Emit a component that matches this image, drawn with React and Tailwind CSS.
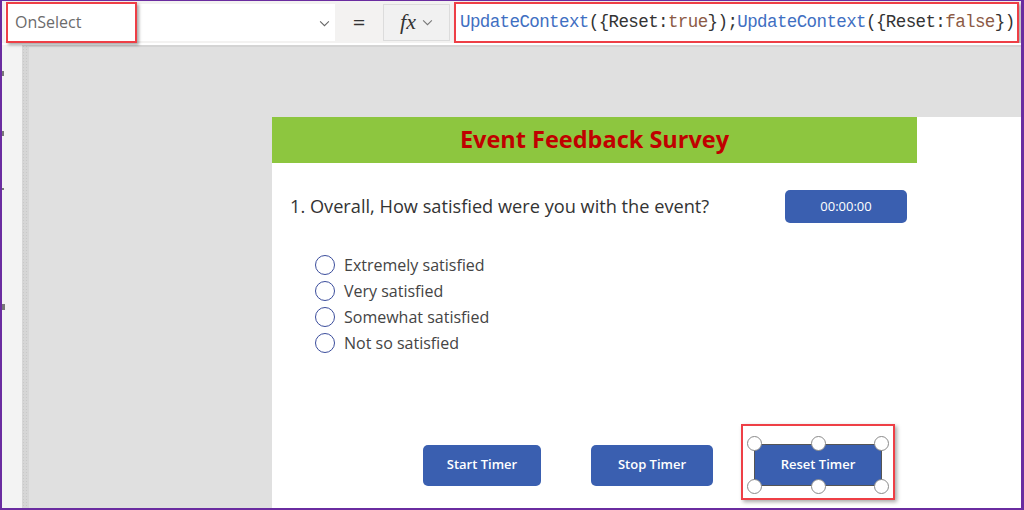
import React from "react";

const sans = { fontFamily: '"Open Sans", "Noto Sans", sans-serif' };
const mono = { fontFamily: '"Liberation Mono", "DejaVu Sans Mono", monospace' };

const options = [
  "Extremely satisfied",
  "Very satisfied",
  "Somewhat satisfied",
  "Not so satisfied",
];

const Chevron = ({ className }) => (
  <svg viewBox="0 0 12 8" className={className} fill="none" stroke="currentColor" strokeWidth="1.2">
    <path d="M1 1.5 L6 6.5 L11 1.5" />
  </svg>
);

// little round grab handle used on the selected control
const Handle = ({ className }) => (
  <span className={`absolute w-[15px] h-[15px] rounded-full bg-white border border-[#8a8a8a] ${className}`} />
);

const FormulaBar = () => (
  <div className="h-[42px] bg-[#f3f2f1] flex items-center pl-[3px] pr-[2px] shrink-0">
    <div className="relative w-[330px] h-[37px] bg-white flex items-center shrink-0">
      <span className="pl-[10px] text-[16px] text-[#6b6b6b]" style={sans}>OnSelect</span>
      <Chevron className="absolute right-[5px] top-[16px] w-[11px] h-[7px] text-[#666]" />
      {/* highlight around the property name */}
      <div className="absolute left-[1px] -top-[2px] w-[131px] h-[41px] border-2 border-[#ee3f46] shadow-[2px_2px_3px_rgba(0,0,0,0.35)]" />
    </div>
    <div className="w-[48px] shrink-0 flex justify-center text-[22px] text-[#333] leading-none pb-[2px]" style={sans}>=</div>
    <div className="w-[67px] h-[37px] shrink-0 border border-[#dcdcdc] bg-[#f1f1f1] flex items-center justify-center gap-[6px]">
      <span className="text-[22px] italic text-[#333] leading-none" style={{ fontFamily: '"Liberation Serif", serif' }}>fx</span>
      <Chevron className="w-[11px] h-[7px] text-[#777]" />
    </div>
    <div className="ml-[4px] flex-1 min-w-0 overflow-hidden h-[41px] bg-white border-2 border-[#ee3f46] shadow-[2px_2px_3px_rgba(0,0,0,0.3)] flex items-center pl-[4px]">
      <span className="text-[17.5px] whitespace-nowrap text-[#333] tracking-[-0.6px]" style={mono}>
        <span className="text-[#3f6fc2]">UpdateContext</span>({"{"}Reset:<span className="text-[#8c5a45]">true</span>{"}"});
        <span className="text-[#3f6fc2]">UpdateContext</span>({"{"}Reset:<span className="text-[#8c5a45]">false</span>{"})"}
      </span>
    </div>
  </div>
);

const Radio = ({ label }) => (
  <div className="flex items-center h-[26px]">
    <span className="w-[20px] h-[20px] rounded-full border-[1.5px] border-[#3b4d9c] bg-white" />
    <span className="ml-[9px] text-[16px] text-[#444]" style={sans}>{label}</span>
  </div>
);

const Button = ({ children, width }) => (
  <button
    className="h-[41px] rounded-[5px] bg-[#3a5fb0] text-white text-[13px] font-semibold"
    style={{ ...sans, width }}
  >
    {children}
  </button>
);

const Screen = () => (
  <div className="flex-1 bg-white flex flex-col">
    <div className="w-[645px] h-[46px] bg-[#8dc63f] flex items-center justify-center">
      <span className="text-[23.5px] font-bold text-[#c00000]" style={sans}>Event Feedback Survey</span>
    </div>

    <div className="w-[645px] flex items-center justify-between pt-[27px] pl-[18px] pr-[10px]">
      <span className="text-[18.2px] text-[#333]" style={sans}>1. Overall, How satisfied were you with the event?</span>
      <div className="w-[122px] h-[33px] rounded-[5px] bg-[#3a5fb0] flex items-center justify-center text-[13px] text-white" style={sans}>
        00:00:00
      </div>
    </div>

    <div className="flex flex-col pl-[43px] pt-[29px]">
      {options.map((o) => (
        <Radio key={o} label={o} />
      ))}
    </div>

    <div className="flex items-center pl-[151px] pt-[88px]">
      <Button width={118}>Start Timer</Button>
      <div className="ml-[50px]">
        <Button width={122}>Stop Timer</Button>
      </div>
      <div className="ml-[41px] relative">
        <button
          className="w-[128px] h-[42px] bg-[#3a5fb0] border border-[#555] text-white text-[13px] font-semibold"
          style={sans}
        >
          Reset Timer
        </button>
        <Handle className="-left-[7px] -top-[8px]" />
        <Handle className="left-[57px] -top-[8px]" />
        <Handle className="-right-[7px] -top-[8px]" />
        <Handle className="-left-[7px] -bottom-[8px]" />
        <Handle className="left-[57px] -bottom-[8px]" />
        <Handle className="-right-[7px] -bottom-[8px]" />
        <div className="absolute -left-[13px] -top-[20px] w-[154px] h-[76px] border-2 border-[#ee3f46] shadow-[2px_2px_4px_rgba(0,0,0,0.35)]" />
      </div>
    </div>
  </div>
);

export default function App() {
  return (
    <div className="w-[1024px] h-[510px] overflow-hidden border-l-2 border-r-[3px] border-b-2 border-t border-[#6a2ca0] flex flex-col bg-[#f3f2f1]">
      <FormulaBar />
      <div className="h-[2px] bg-white shrink-0" />
      <div className="flex-1 flex min-h-0">
        {/* collapsed tree pane */}
        <div className="w-[20px] bg-[#f3f3f3] shrink-0 flex flex-col">
          <span className="mt-[26px] w-[2px] h-[5px] bg-[#777]" />
          <span className="mt-[55px] w-[2px] h-[5px] bg-[#777]" />
          <span className="mt-[52px] w-[2px] h-[2px] bg-[#777]" />
          <span className="mt-[114px] w-[3px] h-[6px] bg-[#777]" />
        </div>
        <div className="w-[7px] shrink-0 bg-[#d6d6d6] bg-[radial-gradient(#c8c8c8_1px,transparent_1px)] bg-[length:3px_3px]" />
        <div className="flex-1 bg-[#e0e0e0] flex flex-col pt-[70px] pl-[243px] border-t-2 border-[#d4d4d4]">
          <Screen />
        </div>
      </div>
    </div>
  );
}
